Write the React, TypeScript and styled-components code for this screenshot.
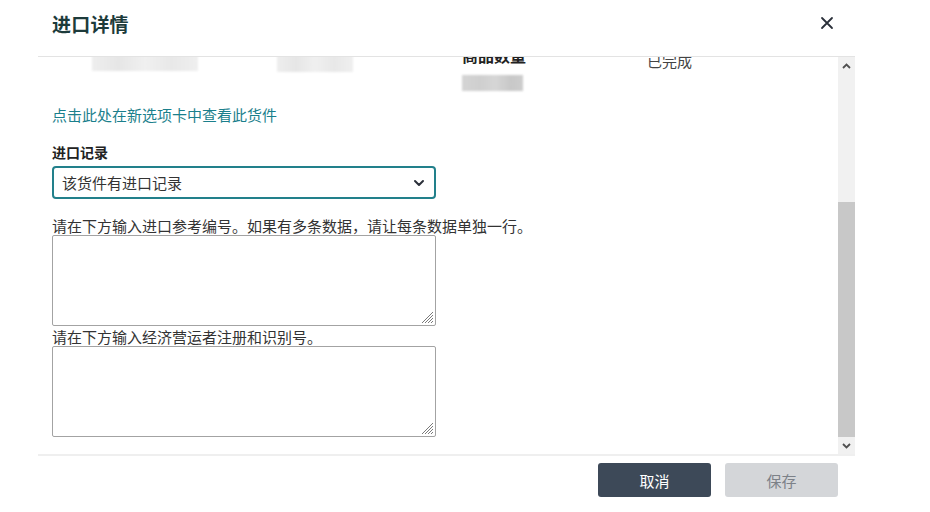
import React, { useLayoutEffect, useRef } from 'react';
import styled, { createGlobalStyle } from 'styled-components';

const GlobalStyle = createGlobalStyle`
    html, body {
        margin: 0;
        padding: 0;
        background: #ffffff;
        font-family: "Noto Sans CJK SC", "Noto Sans", sans-serif;
        color: #333333;
    }
    * { box-sizing: border-box; }
`;

const Grip: React.FC = () => (
    <GripMark width="14" height="14" viewBox="0 0 14 14">
        <path d="M13 2 L2 13 M13 5 L5 13 M13 8 L8 13 M13 11 L11 13" stroke="#7a7a7a" strokeWidth="1" />
    </GripMark>
);

const App: React.FC = () => {
    const paneRef = useRef<HTMLDivElement>(null);

    // the dialog body is scrolled a little, like in the capture
    useLayoutEffect(() => {
        if (paneRef.current) paneRef.current.scrollTop = 30;
    }, []);

    return (
        <>
            <GlobalStyle />
            <Dialog>
                <Header>
                    <h1>进口详情</h1>
                    <CloseButton aria-label="close">
                        <svg width="14" height="14" viewBox="0 0 14 14">
                            <path d="M2 2 L12 12 M12 2 L2 12" stroke="#2b303a" strokeWidth="1.8" strokeLinecap="round" />
                        </svg>
                    </CloseButton>
                </Header>
                <Body>
                    <Pane ref={paneRef}>
                        <Summary>
                            <Cell pad={26}>
                                <Redacted w={106} h={18} tone="light" />
                            </Cell>
                            <Cell pad={28}>
                                <Redacted w={76} h={17} tone="light" />
                            </Cell>
                            <Cell pad={18}>
                                <strong>商品数量</strong>
                                <Redacted w={61} h={16} tone="dark" />
                            </Cell>
                            <Cell pad={24}>
                                <span>已完成</span>
                            </Cell>
                        </Summary>
                        <LinkText href="#">点击此处在新选项卡中查看此货件</LinkText>
                        <FieldLabel>进口记录</FieldLabel>
                        <SelectBox>
                            <span>该货件有进口记录</span>
                            <svg width="12" height="8" viewBox="0 0 12 8">
                                <path d="M2 2 L6 6 L10 2" fill="none" stroke="#2b303a" strokeWidth="2" strokeLinecap="round" strokeLinejoin="round" />
                            </svg>
                        </SelectBox>
                        <Hint>请在下方输入进口参考编号。如果有多条数据，请让每条数据单独一行。</Hint>
                        <AreaWrap>
                            <Area />
                            <Grip />
                        </AreaWrap>
                        <Hint tight>请在下方输入经济营运者注册和识别号。</Hint>
                        <AreaWrap>
                            <Area />
                            <Grip />
                        </AreaWrap>
                    </Pane>
                    <ScrollBar>
                        <ScrollButton>
                            <svg width="9" height="6" viewBox="0 0 9 6">
                                <path d="M1 5 L4.5 1.5 L8 5" fill="none" stroke="#505050" strokeWidth="1.8" />
                            </svg>
                        </ScrollButton>
                        <Track>
                            <Thumb />
                        </Track>
                        <ScrollButton>
                            <svg width="9" height="6" viewBox="0 0 9 6">
                                <path d="M1 1 L4.5 4.5 L8 1" fill="none" stroke="#505050" strokeWidth="1.8" />
                            </svg>
                        </ScrollButton>
                    </ScrollBar>
                </Body>
                <Footer>
                    <Button variant="primary">取消</Button>
                    <Button variant="disabled">保存</Button>
                </Footer>
            </Dialog>
        </>
    );
};

const Dialog = styled.div`
    margin-left: 38px;
    width: 817px;
    height: 512px;
    display: flex;
    flex-direction: column;
`;

const Header = styled.div`
    height: 57px;
    flex-shrink: 0;
    display: flex;
    align-items: center;
    justify-content: space-between;
    padding: 0 20px 10px 14px;
    border-bottom: 1px solid #e3e3e3;
    & > h1 {
        margin: 0;
        font-size: 19px;
        font-weight: 700;
        color: #1d3b3b;
        letter-spacing: 0.2px;
    }
`;

const CloseButton = styled.button`
    border: none;
    background: transparent;
    padding: 0;
    width: 16px;
    height: 16px;
    display: flex;
    align-items: center;
    justify-content: center;
    cursor: pointer;
`;

const Body = styled.div`
    height: 399px;
    flex-shrink: 0;
    display: flex;
    border-bottom: 2px solid #efefef;
`;

const Pane = styled.div`
    flex: 1;
    overflow-y: scroll;
    scrollbar-width: none;
    padding: 0 14px 20px 14px;
    &::-webkit-scrollbar { display: none; }
`;

const Summary = styled.div`
    display: grid;
    grid-template-columns: repeat(4, 185px);
    grid-template-rows: 64px;
    margin-left: 40px;
`;

const Cell = styled.div<{ pad: number }>`
    padding-top: ${p => p.pad}px;
    display: flex;
    flex-direction: column;
    gap: 10px;
    font-size: 15px;
    line-height: 20px;
    & > strong {
        font-weight: 700;
        font-size: 16px;
        color: #222;
    }
    & > span {
        color: #444;
    }
`;

const Redacted = styled.div<{ w: number; h: number; tone: 'light' | 'dark' }>`
    width: ${p => p.w}px;
    height: ${p => p.h}px;
    background: ${p => p.tone === 'dark'
        ? 'linear-gradient(90deg, #d4d4d4 0%, #cfcfcf 30%, #d6d6d6 55%, #c8c8c8 80%, #cdcdcd 100%)'
        : 'linear-gradient(90deg, #eeeeee 0%, #e6e6e6 25%, #f0f0f0 50%, #e8e8e8 75%, #efefef 100%)'};
    filter: blur(1px);
`;

const LinkText = styled.a`
    display: block;
    margin-top: 14px;
    font-size: 15px;
    line-height: 20px;
    color: #1b7f8c;
    text-decoration: none;
`;

const FieldLabel = styled.div`
    margin-top: 18px;
    font-size: 14px;
    line-height: 18px;
    font-weight: 700;
    color: #222;
`;

const SelectBox = styled.div`
    margin-top: 5px;
    width: 384px;
    height: 33px;
    border: 2px solid #22808b;
    border-radius: 4px;
    display: flex;
    align-items: center;
    justify-content: space-between;
    padding: 0 9px 0 8px;
    font-size: 15px;
    color: #333;
`;

const Hint = styled.div<{ tight?: boolean }>`
    margin-top: ${p => (p.tight ? 2 : 18)}px;
    font-size: 15px;
    line-height: 18px;
    color: #333;
`;

const AreaWrap = styled.div`
    position: relative;
    width: 384px;
    height: 91px;
`;

const Area = styled.textarea`
    display: block;
    width: 100%;
    height: 100%;
    border: 1px solid #a3a3a3;
    border-radius: 2px;
    resize: none;
    font-family: inherit;
    outline: none;
`;

const GripMark = styled.svg`
    position: absolute;
    right: 2px;
    bottom: 2px;
    pointer-events: none;
`;

const ScrollBar = styled.div`
    width: 17px;
    flex-shrink: 0;
    display: flex;
    flex-direction: column;
    background: #f1f1f1;
`;

const ScrollButton = styled.div`
    height: 17px;
    display: flex;
    align-items: center;
    justify-content: center;
`;

const Track = styled.div`
    flex: 1;
    display: flex;
    flex-direction: column;
    justify-content: flex-end;
`;

const Thumb = styled.div`
    height: 235px;
    background: #c8c8c8;
`;

const Footer = styled.div`
    display: flex;
    justify-content: flex-end;
    gap: 14px;
    padding: 7px 17px 0 0;
`;

const Button = styled.button<{ variant: 'primary' | 'disabled' }>`
    width: 113px;
    height: 34px;
    border: none;
    border-radius: 3px;
    font-family: inherit;
    font-size: 15px;
    background: ${p => (p.variant === 'primary' ? '#3d4958' : '#d4d6d9')};
    color: ${p => (p.variant === 'primary' ? '#ffffff' : '#7c8188')};
    cursor: ${p => (p.variant === 'primary' ? 'pointer' : 'default')};
`;

export default App;
